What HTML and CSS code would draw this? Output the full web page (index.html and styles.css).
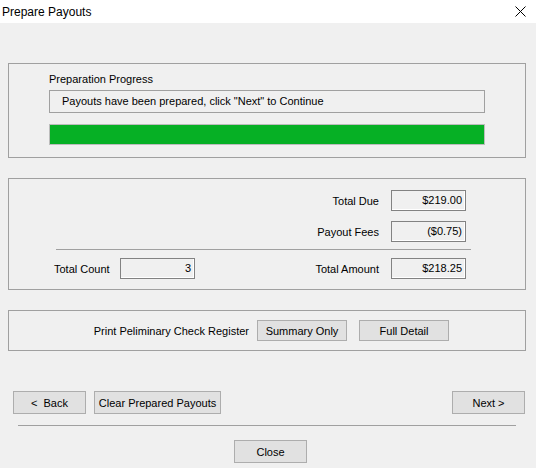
FILE: index.html
```html
<!DOCTYPE html>
<html lang="en">
<head>
    <meta charset="UTF-8">
    <meta name="viewport" content="width=device-width, initial-scale=1.0">
    <title>Prepare Payouts</title>
    <link rel="stylesheet" href="styles.css">
</head>
<body>

    <div class="titlebar">
        <span class="title">Prepare Payouts</span>
        <svg class="close-x" width="11" height="11" viewBox="0 0 11 11">
            <path d="M0.5 0.5 L10.5 10.5 M10.5 0.5 L0.5 10.5" stroke="#000" stroke-width="1" fill="none"/>
        </svg>
    </div>

    <div class="window">

        <!-- progresso -->
        <div class="group group-progress">
            <div class="caption">Preparation Progress</div>
            <div class="status">Payouts have been prepared, click "Next" to Continue</div>
            <div class="progress"><div class="progress-fill"></div></div>
        </div>

        <!-- totais -->
        <div class="group group-totals">
            <div class="row">
                <span class="lbl">Total Due</span>
                <span class="field">$219.00</span>
            </div>
            <div class="row">
                <span class="lbl">Payout Fees</span>
                <span class="field">($0.75)</span>
            </div>
            <div class="sep"></div>
            <div class="row row-last">
                <div class="count">
                    <span class="lbl-left">Total Count</span>
                    <span class="field">3</span>
                </div>
                <span class="lbl">Total Amount</span>
                <span class="field">$218.25</span>
            </div>
        </div>

        <!-- relatorio -->
        <div class="group group-print">
            <span class="print-lbl">Print Peliminary Check Register</span>
            <button class="btn btn-summary">Summary Only</button>
            <button class="btn btn-detail">Full Detail</button>
        </div>

    </div>

    <div class="nav">
        <button class="btn btn-back">&lt; &nbsp;Back</button>
        <button class="btn btn-clear">Clear Prepared Payouts</button>
        <span class="spacer"></span>
        <button class="btn btn-next">Next &gt;</button>
    </div>
    <div class="bottom-sep"></div>
    <div class="footer">
        <button class="btn btn-close">Close</button>
    </div>

</body>
</html>
```

FILE: styles.css
```css
body {
    margin: 0;
    background-color: #f0f0f0;
    font-family: 'Liberation Sans', Arial, sans-serif;
    font-size: 11px;
    color: #000000;
    width: 536px;
    height: 468px;
    overflow: hidden;
}

.titlebar {
    height: 23px;
    background-color: #ffffff;
    display: flex;
    align-items: center;
    justify-content: space-between;
    padding: 0 10px 0 2px;
}

.title {
    font-size: 12px;
}

.close-x {
    display: block;
}

.window {
    padding: 40px 10px 0 8px;
}

.group {
    border: 1px solid #a0a0a0;
    box-sizing: border-box;
}

.group-progress {
    height: 95px;
    padding: 9px 40px 0 40px;
}

.caption {
    height: 13px;
    line-height: 13px;
    margin-bottom: 4px;
}

.status {
    width: 436px;
    height: 23px;
    box-sizing: border-box;
    border: 1px solid #a0a0a0;
    line-height: 21px;
    padding-left: 12px;
}

.progress {
    width: 436px;
    height: 21px;
    margin-top: 11px;
    box-sizing: border-box;
    border: 1px solid #bcbcbc;
    background-color: #e6e6e6;
}

.progress-fill {
    width: 100%;
    height: 100%;
    background-color: #06b025;
}

.group-totals {
    margin-top: 20px;
    height: 112px;
    padding: 11px 59px 0 0;
}

.row {
    display: flex;
    align-items: center;
    justify-content: flex-end;
    height: 21px;
    margin-bottom: 10px;
}

.row-last {
    margin-bottom: 0;
    padding-left: 45px;
}

.lbl {
    margin-right: 12px;
}

.count {
    display: flex;
    align-items: center;
    margin-right: auto;
}

.lbl-left {
    width: 66px;
}

.field {
    width: 75px;
    height: 21px;
    box-sizing: border-box;
    border: 1px solid #828282;
    box-shadow: inset -1px -1px 0 #ffffff;
    text-align: right;
    line-height: 19px;
    padding-right: 3px;
}

.sep {
    height: 1px;
    background-color: #a0a0a0;
    margin: -3px -5px 8px 47px;
}

.group-print {
    margin-top: 20px;
    height: 41px;
    display: flex;
    align-items: center;
    padding: 0 76px 0 0;
}

.print-lbl {
    flex: 1;
    text-align: right;
    margin-right: 8px;
}

.btn {
    font-family: 'Liberation Sans', Arial, sans-serif;
    font-size: 11px;
    color: #000000;
    background-color: #e1e1e1;
    border: 1px solid #adadad;
    box-sizing: border-box;
    padding: 0;
    margin: 0;
    height: 23px;
}

.btn-summary, .btn-detail {
    width: 90px;
    height: 21px;
}

.btn-detail {
    margin-left: 12px;
}

.nav {
    display: flex;
    margin-top: 40px;
    padding: 0 11px 0 13px;
}

.btn-back {
    width: 73px;
}

.btn-clear {
    width: 127px;
    margin-left: 8px;
}

.spacer {
    flex: 1;
}

.btn-next {
    width: 73px;
}

.bottom-sep {
    height: 1px;
    background-color: #a0a0a0;
    margin: 11px 20px 0 18px;
}

.footer {
    margin-top: 14px;
    padding-left: 234px;
}

.btn-close {
    width: 73px;
}
```
